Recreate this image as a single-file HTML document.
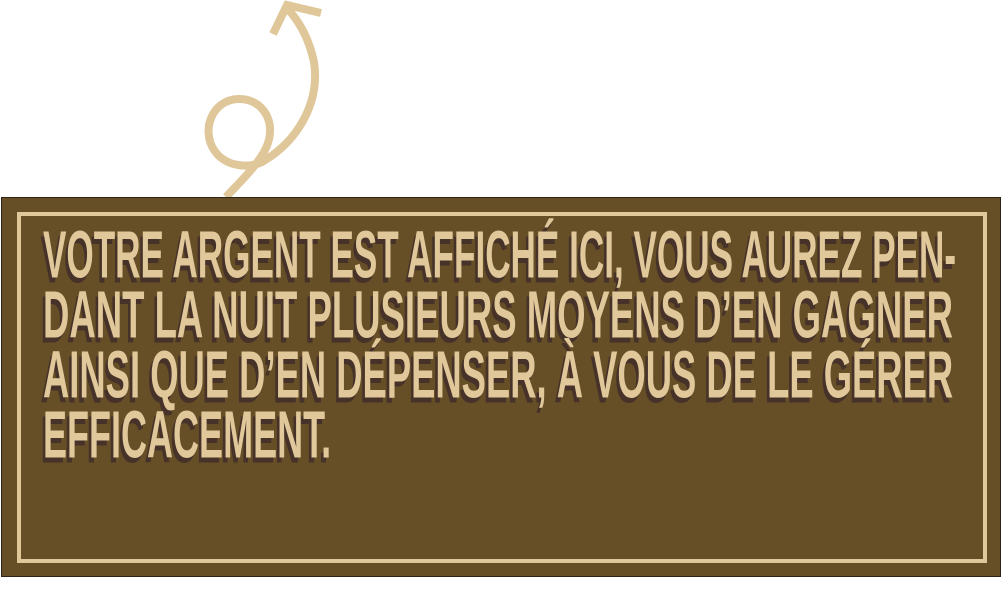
<!DOCTYPE html>
<html><head><meta charset="utf-8">
<style>
html,body{margin:0;padding:0;background:#fff;width:1002px;height:596px;overflow:hidden;position:relative}
.box{position:absolute;left:1px;top:197px;width:998px;height:378px;background:#664e27;border:1px solid #2e2416}
.inner{position:absolute;left:17px;top:212px;width:962px;height:343px;border:4px solid #e0c89b}
.line{position:absolute;left:0;top:0;white-space:nowrap;font-family:"Liberation Sans Narrow","Liberation Sans",sans-serif;font-weight:bold;font-size:55px;line-height:55px;transform-origin:0 0;color:#e0c89b;text-shadow:-4px 4px 0 #463229}
</style></head><body>
<svg width="1002" height="200" style="position:absolute;left:0;top:0" fill="none" stroke="#dfc79a" stroke-width="8" stroke-linecap="butt">
<path d="M226,197 C240,182 258,165 266,148 C278,122 262,98 238,99 C212,100 201,130 214,150 C226,168 250,168 262,162 C300,140 320,100 314,62 C309,38 298,20 287,8"/>
<path d="M321,13 L287,5 L273,34"/>
</svg>
<div class="box"></div>
<div class="inner"></div>
<div class="line" data-w="913" style="left:43px;top:222px">VOTRE ARGENT EST AFFICHÉ ICI, VOUS AUREZ PEN-</div>
<div class="line" data-w="910" style="left:43px;top:282px">DANT LA NUIT PLUSIEURS MOYENS D’EN GAGNER</div>
<div class="line" data-w="910" style="left:43px;top:342px">AINSI QUE D’EN DÉPENSER, À VOUS DE LE GÉRER</div>
<div class="line" style="left:43px;top:402px">EFFICACEMENT.</div>
<script>
var ls=document.querySelectorAll('.line'),sum=0,n=0;
ls.forEach(function(l){var w=l.getAttribute('data-w');if(w){var s=w/l.offsetWidth;sum+=s;n++;l.style.transform='scale('+s+',1.21)';}});
ls.forEach(function(l){if(!l.getAttribute('data-w')){l.style.transform='scale('+(sum/n)+',1.21)';}});
</script>
</body></html>
